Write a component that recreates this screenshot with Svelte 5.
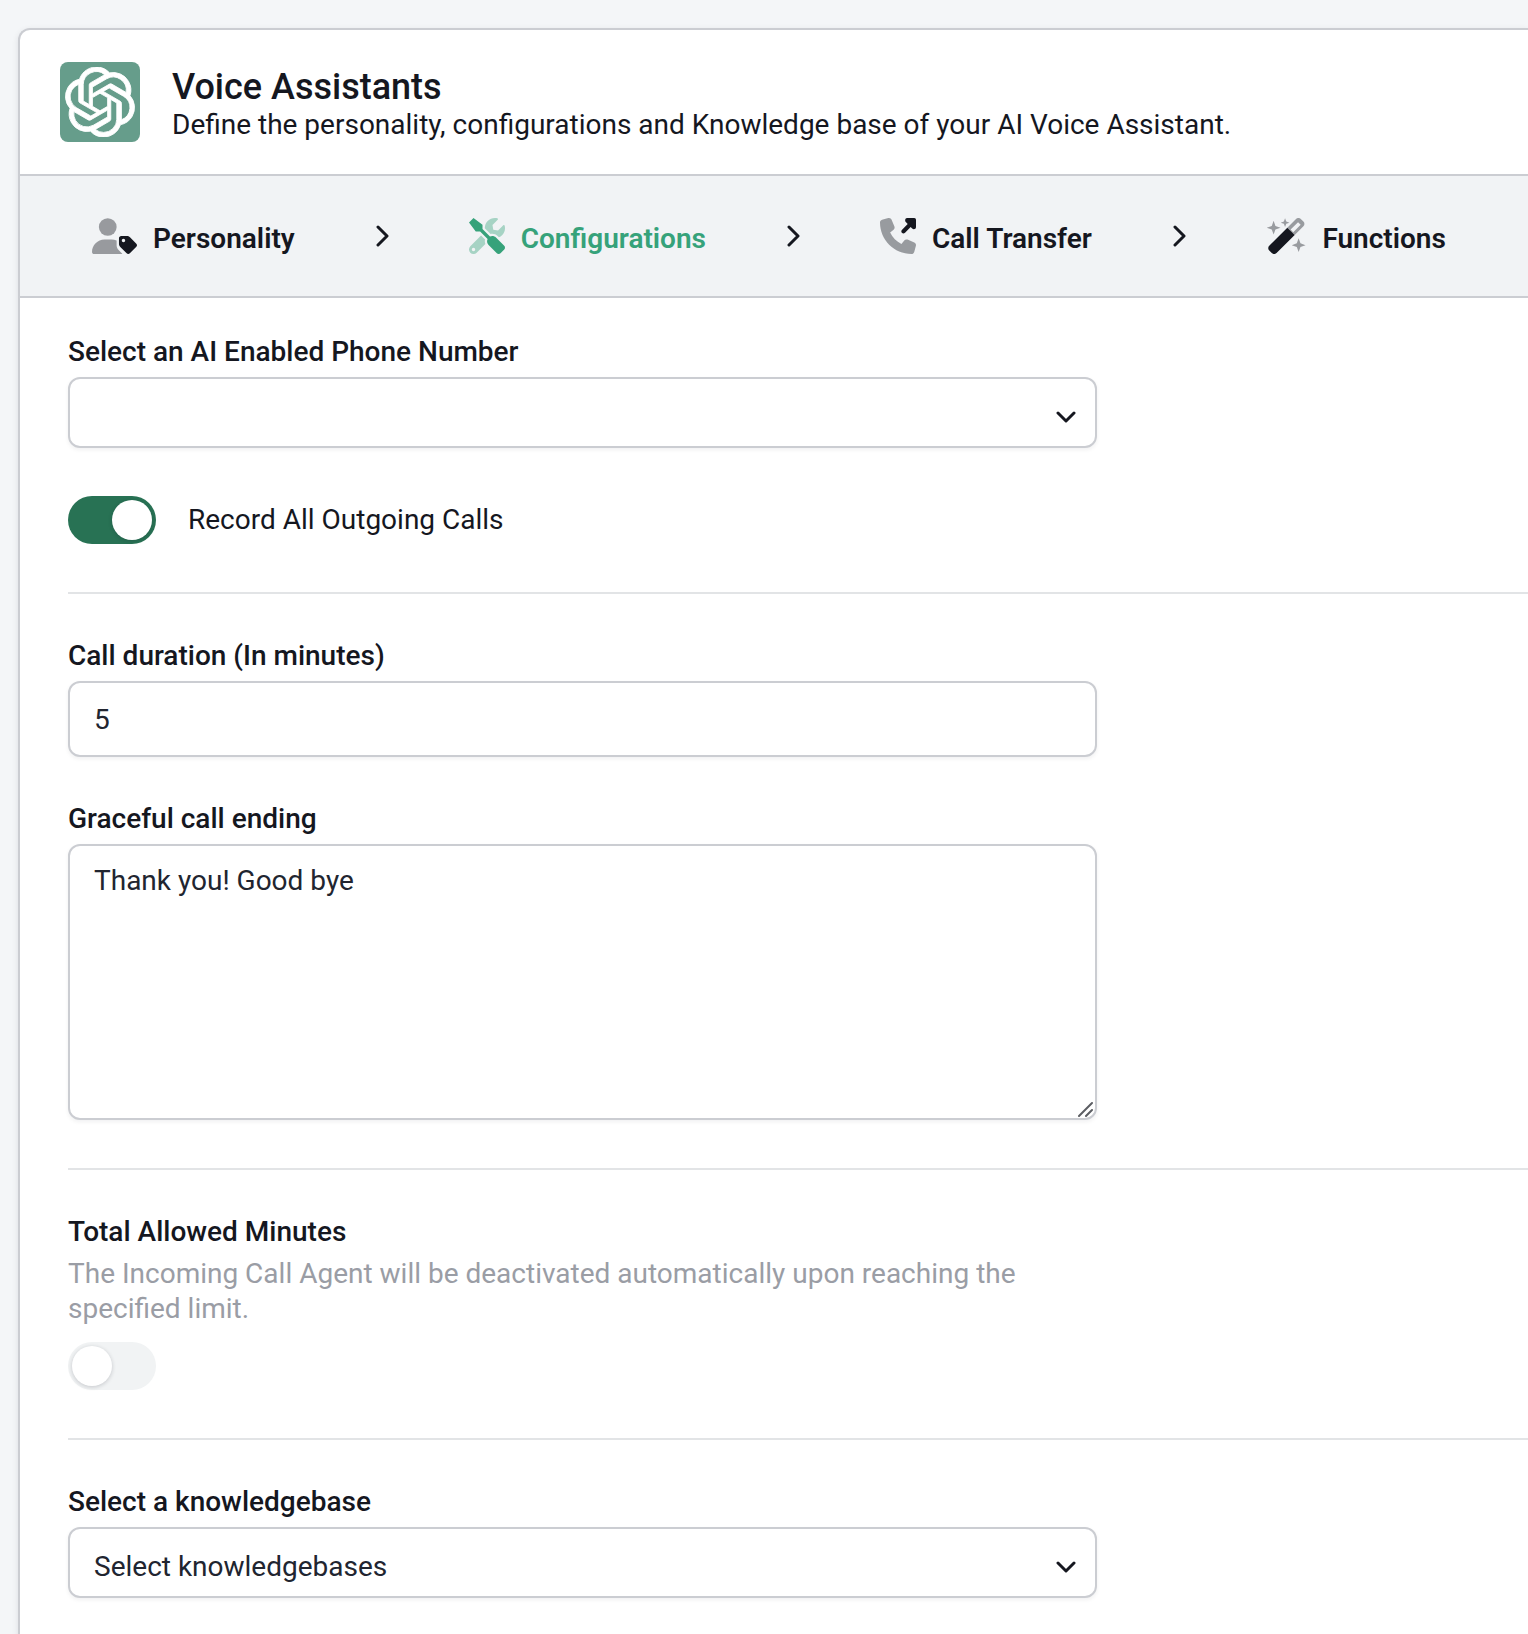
<script>
  const steps = [
    { id: 'personality', label: 'Personality' },
    { id: 'configurations', label: 'Configurations' },
    { id: 'transfer', label: 'Call Transfer' },
    { id: 'functions', label: 'Functions' },
  ];

  let current = $state('configurations');
  let phone = $state('');
  let recordCalls = $state(true);
  let duration = $state('5');
  let ending = $state('Thank you! Good bye');
  let limitMinutes = $state(false);
  let knowledgebase = $state('');
</script>

{#snippet icon(id)}
  {#if id === 'personality'}
    <svg class="icon" viewBox="0 0 640 512" aria-hidden="true">
      <g class="soft">
        <circle cx="224" cy="128" r="126" />
        <path d="M178 304C80 304 0 384 0 482c0 17 13 30 30 30h388c5 0 9-1 13-3l-53-53c-18-18-28-42-28-67v-70c-23-10-47-15-72-15z" />
      </g>
      <path d="M630.6 364.9l-90.3-90.2c-12-12-28.300-18.700-45.300-18.700h-79.300c-17.700 0-32 14.300-32 32v79.200c0 17 6.700 33.200 18.700 45.200l90.300 90.200c12.500 12.500 32.800 12.500 45.300 0l92.500-92.500c12.600-12.500 12.600-32.700.1-45.200zm-182.800-21c-13.300 0-24-10.700-24-24s10.700-24 24-24 24 10.700 24 24c0 13.200-10.700 24-24 24z" />
    </svg>
  {:else if id === 'configurations'}
    <svg class="icon" viewBox="0 0 512 512" aria-hidden="true">
      <path class="soft" d="M331.700 225c28.300 0 54.900 11 74.900 31l19.400 19.400c15.800-6.900 30.800-16.500 43.800-29.500 37.100-37.100 49.700-89.300 37.900-136.700-2.200-9-13.500-12.100-20.100-5.500l-74.400 74.400-67.900-11.300L334 98.900l74.400-74.400c6.600-6.600 3.400-17.900-5.700-20.200-47.400-11.700-99.600.9-136.600 37.900-28.500 28.500-41.900 66.100-41.200 103.600l82.100 82.100c8.100-1.900 16.500-2.900 24.700-2.900zm-103.900 82l-56.700-56.700L18.700 402.800c-25 25-25 65.500 0 90.500s65.500 25 90.500 0l123.600-123.600c-7.600-19.900-9.900-41.600-5-62.700zM64 472c-13.200 0-24-10.800-24-24 0-13.300 10.700-24 24-24s24 10.700 24 24c0 13.200-10.700 24-24 24z" />
      <path d="M501.100 395.700L384 278.600c-23.100-23.100-57.600-27.600-85.400-13.900L192 158.100V96L64 0 0 64l96 128h62.100l106.600 106.600c-13.600 27.800-9.200 62.300 13.900 85.400l117.100 117.100c14.600 14.600 38.200 14.600 52.700 0l52.700-52.700c14.500-14.600 14.500-38.200 0-52.700z" />
    </svg>
  {:else if id === 'transfer'}
    <svg class="icon" viewBox="0 0 512 512" aria-hidden="true">
      <path class="soft" d="M164.900 24.600c-7.700-18.600-28-28.500-47.400-23.200l-88 24C12.100 30.200 0 46 0 64C0 311.400 200.600 512 448 512c18 0 33.800-12.100 38.600-29.500l24-88c5.300-19.400-4.600-39.700-23.200-47.400l-96-40c-16.300-6.800-35.200-2.100-46.300 11.600L304.700 368C234.300 334.700 177.300 277.700 144 207.300L193.300 167c13.700-11.200 18.400-30 11.600-46.300l-40-96z" />
      <path d="M384 0h104a24 24 0 0 1 24 24v104c0 30-34 42-54 22l-22-22-80 80c-14 14-32 14-44 2s-12-30 2-44l80-80-24-24C350 42 356 0 384 0z" />
    </svg>
  {:else}
    <svg class="icon" viewBox="0 0 576 512" aria-hidden="true">
      <path d="M303 138L46 395c-19 19-19 49 0 68l36 36c19 19 49 19 68 0l258-257z" />
      <path class="soft" fill-rule="evenodd" d="M303 138L427 14c19-19 49-19 68 0l37 37c19 19 19 49 0 68L408 242zM350 165l37 37 106-106-37-37z" />
      <path class="soft" d="M108 40l26 72 72 26-72 26-26 72-26-72-72-26 72-26zM271 4l17 45 45 17-45 17-17 45-17-45-45-17 45-17zM464 288l26 72 72 26-72 26-26 72-26-72-72-26 72-26z" stroke-width="10" stroke-linejoin="round" />
    </svg>
  {/if}
{/snippet}

{#snippet caret()}
  <svg class="caret" viewBox="0 0 20 12" aria-hidden="true">
    <path d="M2 2l8 8 8-8" />
  </svg>
{/snippet}

<main class="page">
  <section class="card">
    <header class="head">
      <span class="logo">
        <svg viewBox="0 0 24 24" aria-hidden="true">
          <path d="M22.2819 9.8211a5.9847 5.9847 0 0 0-.5157-4.9108 6.0462 6.0462 0 0 0-6.5098-2.9A6.0651 6.0651 0 0 0 4.9807 4.1818a5.9847 5.9847 0 0 0-3.9977 2.9 6.0462 6.0462 0 0 0 .7427 7.0966 5.98 5.98 0 0 0 .511 4.9107 6.051 6.051 0 0 0 6.5146 2.9001A5.9847 5.9847 0 0 0 13.2599 24a6.0557 6.0557 0 0 0 5.7718-4.2058 5.9894 5.9894 0 0 0 3.9977-2.9001 6.0557 6.0557 0 0 0-.7475-7.0729zm-9.022 12.6081a4.4755 4.4755 0 0 1-2.8764-1.0408l.1419-.0804 4.7783-2.7582a.7948.7948 0 0 0 .3927-.6813v-6.7369l2.02 1.1686a.071.071 0 0 1 .038.052v5.5826a4.504 4.504 0 0 1-4.4945 4.4944zm-9.6607-4.1254a4.4708 4.4708 0 0 1-.5346-3.0137l.142.0852 4.783 2.7582a.7712.7712 0 0 0 .7806 0l5.8428-3.3685v2.3324a.0804.0804 0 0 1-.0332.0615L9.74 19.9502a4.4992 4.4992 0 0 1-6.1408-1.6464zM2.3408 7.8956a4.485 4.485 0 0 1 2.3655-1.9728V11.6a.7664.7664 0 0 0 .3879.6765l5.8144 3.3543-2.0201 1.1685a.0757.0757 0 0 1-.071 0l-4.8303-2.7865A4.504 4.504 0 0 1 2.3408 7.872zm16.5963 3.8558L13.1038 8.364 15.1192 7.2a.0757.0757 0 0 1 .071 0l4.8303 2.7913a4.4944 4.4944 0 0 1-.6765 8.1042v-5.6772a.79.79 0 0 0-.407-.667zm2.0107-3.0231l-.142-.0852-4.7735-2.7818a.7759.7759 0 0 0-.7854 0L9.409 9.2297V6.8974a.0662.0662 0 0 1 .0284-.0615l4.8303-2.7866a4.4992 4.4992 0 0 1 6.6802 4.66zM8.3065 12.863l-2.02-1.1638a.0804.0804 0 0 1-.038-.0567V6.0742a4.4992 4.4992 0 0 1 7.3757-3.4537l-.142.0805L8.704 5.459a.7948.7948 0 0 0-.3927.6813zm1.0976-2.3654l2.602-1.4998 2.6069 1.4998v2.9994l-2.5974 1.4997-2.6067-1.4997Z" />
        </svg>
      </span>
      <div class="titles">
        <h1>Voice Assistants</h1>
        <p>Define the personality, configurations and Knowledge base of your AI Voice Assistant.</p>
      </div>
    </header>

    <nav class="steps" aria-label="Assistant setup">
      {#each steps as step, i (step.id)}
        {#if i > 0}
          <svg class="next" viewBox="0 0 14 22" aria-hidden="true">
            <path d="M3 2l9 9-9 9" />
          </svg>
        {/if}
        <button
          type="button"
          class="step"
          class:active={current === step.id}
          aria-current={current === step.id ? 'step' : undefined}
          onclick={() => (current = step.id)}
        >
          {@render icon(step.id)}
          <span class="step-label">{step.label}</span>
        </button>
      {/each}
    </nav>

    <form class="form">
      <div class="group">
        <div class="field">
          <label for="phone">Select an AI Enabled Phone Number</label>
          <div class="stack">
            <select id="phone" class="control select" bind:value={phone}>
              <option value=""></option>
            </select>
            {@render caret()}
          </div>
        </div>
        <div class="toggle-row">
          <input id="record" class="switch" type="checkbox" role="switch" bind:checked={recordCalls} />
          <label class="plain" for="record">Record All Outgoing Calls</label>
        </div>
      </div>

      <div class="group">
        <div class="field">
          <label for="duration">Call duration (In minutes)</label>
          <input id="duration" class="control text" type="text" inputmode="numeric" bind:value={duration} />
        </div>
        <div class="field follow">
          <label for="ending">Graceful call ending</label>
          <div class="stack">
            <textarea id="ending" class="control area" bind:value={ending}></textarea>
            <svg class="grip" viewBox="0 0 16 16" aria-hidden="true">
              <path d="M1 15L14 2M8 15l6-6" />
            </svg>
          </div>
        </div>
      </div>

      <div class="group">
        <div class="limit">
          <label for="limit">Total Allowed Minutes</label>
          <p id="limit-help" class="help">
            The Incoming Call Agent will be deactivated automatically upon reaching the specified limit.
          </p>
          <input
            id="limit"
            class="switch"
            type="checkbox"
            role="switch"
            aria-describedby="limit-help"
            bind:checked={limitMinutes}
          />
        </div>
      </div>

      <div class="group">
        <div class="field">
          <label for="kb">Select a knowledgebase</label>
          <div class="stack">
            <select id="kb" class="control select" bind:value={knowledgebase}>
              <option value="">Select knowledgebases</option>
            </select>
            {@render caret()}
          </div>
        </div>
      </div>
    </form>
  </section>
</main>

<style>
  :global(body) {
    background: #f4f6f8;
  }

  .page,
  .page * {
    box-sizing: border-box;
  }

  .page {
    display: flex;
    flex-direction: column;
    min-height: 100vh;
    padding: 28px 0 0 18px;
    overflow: hidden;
    color: #15171f;
    font-family: Roboto, 'Liberation Sans', sans-serif;
    font-size: 28px;
    line-height: 34px;
  }

  .card {
    flex: 1;
    border: 2px solid #cbcdd2;
    border-width: 2px 0 0 2px;
    border-radius: 12px 0 0 0;
    background: #fff;
    box-shadow: 0 2px 6px rgba(20, 24, 40, 0.1);
  }

  .head {
    display: flex;
    align-items: flex-end;
    gap: 32px;
    padding: 32px 40px;
  }

  .logo {
    display: grid;
    flex: none;
    place-items: center;
    width: 80px;
    height: 80px;
    border-radius: 8px;
    background: #669d8b;
  }

  .logo svg {
    width: 70px;
    height: 70px;
    fill: #fff;
    stroke: #fff;
    stroke-width: 0.3;
  }

  h1,
  p {
    margin: 0;
  }

  h1 {
    font-size: 36px;
    font-weight: 500;
    line-height: 42px;
  }

  .steps {
    display: flex;
    align-items: center;
    gap: 80px;
    height: 124px;
    padding: 0 72px;
    border: solid #cbcdd2;
    border-width: 2px 0;
    background: #f1f3f5;
  }

  .step {
    display: flex;
    flex: none;
    align-items: center;
    gap: 16px;
    padding: 0;
    border: 0;
    background: none;
    color: inherit;
    font: inherit;
    font-weight: 600;
    cursor: pointer;
  }

  .step.active {
    color: #36a27a;
  }

  .step-label {
    padding-top: 6px;
  }

  .icon {
    height: 36px;
    fill: currentColor;
  }

  .soft {
    opacity: 0.4;
  }

  .next,
  .caret,
  .grip {
    flex: none;
    fill: none;
    stroke: #15171f;
    stroke-width: 3;
    stroke-linecap: round;
    stroke-linejoin: round;
  }

  .next {
    width: 14px;
    height: 22px;
  }

  .form {
    padding: 0 0 48px 48px;
  }

  .group {
    padding: 45px 0 48px;
    border-bottom: 2px solid #e2e4e6;
  }

  .group:first-child {
    padding-top: 37px;
  }

  .group:last-child {
    border-bottom: 0;
  }

  .field {
    display: flex;
    flex-direction: column;
    gap: 8px;
    max-width: 1029px;
  }

  .follow {
    margin-top: 45px;
  }

  label {
    font-weight: 500;
  }

  .plain {
    font-weight: 400;
  }

  .stack {
    display: grid;
  }

  .stack > * {
    grid-area: 1 / 1;
  }

  .control {
    width: 100%;
    margin: 0;
    padding: 0 24px;
    border: 2px solid #cbcdd2;
    border-radius: 12px;
    outline: 0;
    background: #fff;
    box-shadow: 0 2px 4px rgba(20, 24, 40, 0.06);
    color: #212530;
    font: inherit;
  }

  .control:focus-visible {
    border-color: #36a27a;
  }

  .text {
    height: 76px;
  }

  .select {
    height: 71px;
    padding-top: 8px;
    appearance: none;
  }

  .area {
    display: block;
    height: 276px;
    padding-top: 18px;
    resize: none;
  }

  .caret {
    align-self: center;
    justify-self: end;
    width: 20px;
    height: 12px;
    margin: 8px 21px 0 0;
    pointer-events: none;
  }

  .grip {
    align-self: end;
    justify-self: end;
    width: 16px;
    height: 16px;
    margin: 0 3px 3px 0;
    stroke: #5c5e63;
    stroke-width: 2;
    pointer-events: none;
  }

  .toggle-row {
    display: flex;
    align-items: center;
    gap: 32px;
    margin-top: 48px;
  }

  .switch {
    display: block;
    flex: none;
    width: 88px;
    height: 48px;
    margin: 0;
    padding: 4px;
    border-radius: 24px;
    background: #f1f3f4;
    appearance: none;
    cursor: pointer;
  }

  .switch::before {
    display: block;
    width: 40px;
    height: 40px;
    border-radius: 50%;
    background: #fff;
    box-shadow: 0 1px 4px rgba(20, 24, 40, 0.2);
    content: '';
  }

  .switch:checked {
    background: #287254;
  }

  .switch:checked::before {
    margin-left: auto;
  }

  .limit {
    max-width: 1029px;
  }

  .help {
    margin: 7px 0 16px;
    color: #9a9da5;
    line-height: 35px;
  }

  .limit label {
    display: block;
  }
</style>
